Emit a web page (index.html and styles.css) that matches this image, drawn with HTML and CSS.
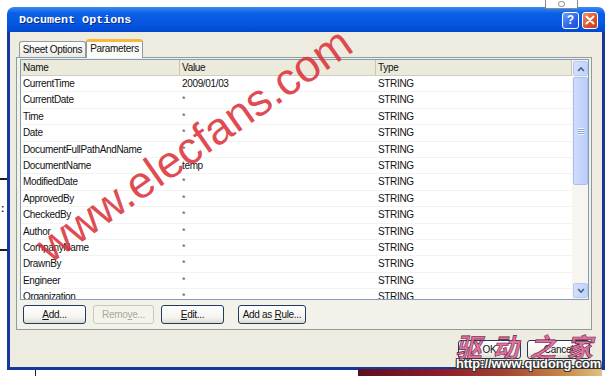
FILE: index.html
```html
<!DOCTYPE html>
<html lang="en">
<head>
    <meta charset="UTF-8">
    <title>Document Options</title>
    <link rel="stylesheet" href="styles.css">
</head>
<body>
    <!-- bits of the window behind -->
    <div class="behind behind-box"><span class="behind-glyph"></span></div>
    <div class="behind behind-line line-a"></div>
    <div class="behind behind-colon">:</div>
    <div class="behind behind-line line-b"></div>
    <div class="behind behind-stem"></div>
    <div class="behind behind-strip"></div>

    <div class="dialog">
        <div class="titlebar">
            <span class="title">Document Options</span>
            <div class="caption">
                <span class="cap cap-help">?</span>
                <span class="cap cap-close">
                    <svg width="10" height="10" viewBox="0 0 10 10"><path d="M1.5 1.5 L8.5 8.5 M8.5 1.5 L1.5 8.5" stroke="#fff" stroke-width="2" stroke-linecap="round"/></svg>
                </span>
            </div>
        </div>

        <div class="client">
            <div class="sheet">
                <div class="tabs">
                    <div class="tab">Sheet Options</div>
                    <div class="tab tab-active">Parameters</div>
                </div>
                <div class="panel">
                    <div class="list">
                        <div class="grid">
                            <div class="head">
                                <div class="hcell">Name</div>
                                <div class="hcell">Value</div>
                                <div class="hcell">Type</div>
                            </div>
                            <div class="row"><div>CurrentTime</div><div>2009/01/03</div><div>STRING</div></div>
                            <div class="row"><div>CurrentDate</div><div class="star">*</div><div>STRING</div></div>
                            <div class="row"><div>Time</div><div class="star">*</div><div>STRING</div></div>
                            <div class="row"><div>Date</div><div class="star">*</div><div>STRING</div></div>
                            <div class="row"><div>DocumentFullPathAndName</div><div class="star">*</div><div>STRING</div></div>
                            <div class="row"><div>DocumentName</div><div>temp</div><div>STRING</div></div>
                            <div class="row"><div>ModifiedDate</div><div class="star">*</div><div>STRING</div></div>
                            <div class="row"><div>ApprovedBy</div><div class="star">*</div><div>STRING</div></div>
                            <div class="row"><div>CheckedBy</div><div class="star">*</div><div>STRING</div></div>
                            <div class="row"><div>Author</div><div class="star">*</div><div>STRING</div></div>
                            <div class="row"><div>CompanyName</div><div class="star">*</div><div>STRING</div></div>
                            <div class="row"><div>DrawnBy</div><div class="star">*</div><div>STRING</div></div>
                            <div class="row"><div>Engineer</div><div class="star">*</div><div>STRING</div></div>
                            <div class="row"><div>Organization</div><div class="star">*</div><div>STRING</div></div>
                        </div>
                        <div class="scrollbar">
                            <div class="sb-btn">
                                <svg width="8" height="6" viewBox="0 0 8 6"><path d="M1 5 L4 2 L7 5" fill="none" stroke="#4d6185" stroke-width="1.6"/></svg>
                            </div>
                            <div class="sb-thumb"><span class="grip"></span></div>
                            <div class="sb-track"></div>
                            <div class="sb-btn">
                                <svg width="8" height="6" viewBox="0 0 8 6"><path d="M1 1 L4 4 L7 1" fill="none" stroke="#4d6185" stroke-width="1.6"/></svg>
                            </div>
                        </div>
                    </div>
                    <div class="btnrow">
                        <div class="btn"><span><u>A</u>dd...</span></div>
                        <div class="btn btn-off"><span>Remo<u>v</u>e...</span></div>
                        <div class="btn"><span><u>E</u>dit...</span></div>
                        <div class="btn btn-rule"><span>Add as <u>R</u>ule...</span></div>
                    </div>
                </div>
            </div>
            <div class="footer">
                <div class="btn">OK</div>
                <div class="btn">Cancel</div>
            </div>
        </div>
    </div>

    <!-- watermarks over the picture -->
    <div class="wm">www.elecfans.com</div>
    <div class="wm-cn">驱动之家</div>
    <div class="wm-url">http://www.qudong.com</div>
</body>
</html>
```

FILE: styles.css
```css
body {
    margin: 0;
    padding: 7px 0 0 7px;
    width: 611px;
    height: 376px;
    box-sizing: border-box;
    overflow: hidden;
    position: relative;
    background: #fff;
    font-family: "Liberation Sans", Arial, sans-serif;
    font-size: 10px;
    color: #111;
}

/* window behind */
.behind {
    position: absolute;
}
.behind-box {
    left: 545px;
    top: -2px;
    width: 31px;
    height: 9px;
    border: 1px solid #8a8a8a;
    background: #fff;
}
.behind-glyph {
    display: block;
    width: 5px;
    height: 4px;
    margin: 2px auto 0;
    border: 1px solid #999;
    border-radius: 50%;
}
.behind-line {
    left: 0;
    width: 7px;
    height: 2px;
    background: #1c1c2c;
}
.line-a {
    top: 178px;
}
.line-b {
    top: 249px;
}
.behind-colon {
    left: 1px;
    top: 203px;
    font-size: 10px;
    font-weight: bold;
}
.behind-stem {
    left: 35px;
    top: 370px;
    width: 1px;
    height: 6px;
    background: #222;
}
.behind-strip {
    left: 358px;
    top: 369px;
    width: 244px;
    height: 7px;
    background: linear-gradient(90deg, #5a0f22, #8c1f2a 35%, #a4412e 60%, #c98a4a 85%, #e0c080);
}

.dialog {
    width: 598px;
    display: flex;
    flex-direction: column;
}
.titlebar {
    height: 25px;
    box-sizing: border-box;
    display: flex;
    align-items: center;
    justify-content: space-between;
    padding: 0 7px 0 12px;
    border-radius: 7px 7px 0 0;
    background: linear-gradient(#3d8af6, #0b5fe6 25%, #0556e0 70%, #0348cf);
}
.title {
    font-family: "Liberation Mono", monospace;
    font-weight: bold;
    font-size: 11.7px;
    color: #fff;
    text-shadow: 1px 1px 0 #0a2a80;
}
.caption {
    display: flex;
    gap: 3px;
    margin-top: 1px;
}
.cap {
    width: 17px;
    height: 17px;
    box-sizing: border-box;
    border: 1px solid #fff;
    border-radius: 3px;
    display: flex;
    align-items: center;
    justify-content: center;
    color: #fff;
    font-weight: bold;
    font-size: 12px;
}
.cap-help {
    background: linear-gradient(135deg, #6aa0f8, #2a66e6 60%, #1c50d0);
}
.cap-close {
    width: 16px;
    background: linear-gradient(135deg, #f09070, #e0542a 55%, #c83a18);
}

.client {
    height: 338px;
    box-sizing: border-box;
    border: 3px solid #17379c;
    border-top: 0;
    background: #eeece1;
    display: flex;
    flex-direction: column;
}
.sheet {
    margin: 0 10px 0 6px;
}
.tabs {
    height: 25px;
    box-sizing: border-box;
    display: flex;
    align-items: flex-end;
    padding: 7px 0 0 3px;
}
.tab {
    height: 16px;
    box-sizing: border-box;
    width: 67px;
    border: 1px solid #919b9c;
    border-bottom: 0;
    border-radius: 3px 3px 0 0;
    background: linear-gradient(#fefefe, #ecebe6);
    text-align: center;
    line-height: 15px;
    letter-spacing: -0.3px;
}
.tab-active {
    width: 57px;
    height: 19px;
    margin-bottom: -1px;
    border-top: 3px solid #f8b83c;
    background: #fbfbf8;
    line-height: 14px;
    position: relative;
}

.panel {
    height: 273px;
    box-sizing: border-box;
    border: 1px solid #919b9c;
    padding: 1px 2px 0 3px;
    background: #f2f1ea;
}
.list {
    height: 241px;
    box-sizing: border-box;
    border: 1px solid #7f9db9;
    background: #fff;
    display: flex;
}
.grid {
    flex: 1;
    overflow: hidden;
}
.head,
.row {
    display: grid;
    grid-template-columns: 159px 196px 1fr;
}
.head {
    height: 16px;
    box-sizing: border-box;
    background: #ebeadb;
    border-bottom: 1px solid #d2cebe;
}
.hcell {
    padding-left: 2px;
    line-height: 15px;
    border-right: 1px solid #c9c6b4;
    letter-spacing: -0.3px;
}
.row {
    height: 16.4px;
    box-sizing: border-box;
    line-height: 16px;
    border-bottom: 1px solid #f3f3f1;
    letter-spacing: -0.35px;
}
.row div {
    padding-left: 2px;
    white-space: nowrap;
}
.row .star {
    font-size: 9px;
    color: #555;
    line-height: 14px;
}

.scrollbar {
    width: 16px;
    display: flex;
    flex-direction: column;
    background: #f6f5f0;
}
.sb-btn {
    height: 15px;
    box-sizing: border-box;
    margin: 1px 0 1px 1px;
    border: 1px solid #b6c9f2;
    border-radius: 2px;
    background: linear-gradient(90deg, #d4e0fc, #c1d3fb);
    display: flex;
    align-items: center;
    justify-content: center;
}
.sb-thumb {
    height: 108px;
    box-sizing: border-box;
    margin-left: 1px;
    border: 1px solid #a9bfee;
    border-radius: 2px;
    background: linear-gradient(90deg, #cfdcfc, #bccffa);
    display: flex;
    align-items: center;
    justify-content: center;
}
.grip {
    width: 6px;
    height: 7px;
    background: repeating-linear-gradient(#eef3fe 0 1px, #8ea6d8 1px 2px);
}
.sb-track {
    flex: 1;
}

.btnrow {
    display: flex;
    gap: 7px;
    margin-top: 5px;
    padding-left: 3px;
}
.btn {
    width: 63px;
    height: 19px;
    box-sizing: border-box;
    border: 1px solid #23395e;
    border-radius: 3px;
    background: linear-gradient(#ffffff, #f4f3ee 70%, #dcd8cc);
    display: flex;
    align-items: center;
    justify-content: center;
    letter-spacing: -0.3px;
}
.btn-off {
    width: 61px;
    border-color: #cbc8bb;
    background: #f5f4ec;
    color: #aca899;
}
.btn-rule {
    width: 68px;
    margin-left: 7px;
}
.footer {
    display: flex;
    justify-content: flex-end;
    gap: 6px;
    margin-top: 10px;
    padding-right: 12px;
}

/* watermarks */
.wm {
    position: absolute;
    left: 4px;
    top: 122px;
    width: 380px;
    text-align: center;
    font-size: 45px;
    line-height: 45px;
    color: rgba(218, 44, 52, 0.85);
    transform: rotate(-35deg);
}
.wm-cn {
    position: absolute;
    left: 458px;
    top: 332px;
    font-family: "Noto Sans CJK SC", sans-serif;
    font-weight: bold;
    font-size: 26px;
    line-height: 28px;
    letter-spacing: 11px;
    color: rgba(226, 96, 150, 0.9);
    -webkit-text-stroke: 0.6px #5a2440;
    transform: skewX(-12deg);
}
.wm-url {
    position: absolute;
    left: 456px;
    top: 357px;
    font-weight: bold;
    font-size: 12.8px;
    line-height: 14px;
    color: #fff;
    text-shadow: 1px 1px 0 #333, -1px -1px 0 #333, 1px -1px 0 #333, -1px 1px 0 #333;
}
```
